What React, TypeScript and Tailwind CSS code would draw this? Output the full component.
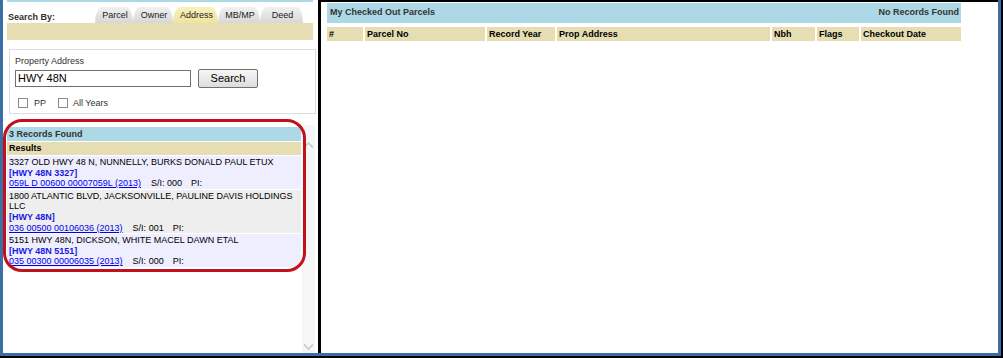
import React from "react"

const tabs = [
  { label: "Parcel", w: "w-[38px]", active: false },
  { label: "Owner", w: "w-[40px]", active: false },
  { label: "Address", w: "w-[45px]", active: true },
  { label: "MB/MP", w: "w-[42px]", active: false },
  { label: "Deed", w: "w-[43px]", active: false },
]

const results = [
  {
    addr: "3327 OLD HWY 48 N, NUNNELLY, BURKS DONALD PAUL ETUX",
    key: "[HWY 48N 3327]",
    parcel: "059L D 00600 00007059L (2013)",
    si: "000",
    bg: "bg-[#eeeeff]",
  },
  {
    addr: "1800 ATLANTIC BLVD, JACKSONVILLE, PAULINE DAVIS HOLDINGS LLC",
    key: "[HWY 48N]",
    parcel: "036 00500 00106036 (2013)",
    si: "001",
    bg: "bg-[#eeeeee]",
  },
  {
    addr: "5151 HWY 48N, DICKSON, WHITE MACEL DAWN ETAL",
    key: "[HWY 48N 5151]",
    parcel: "035 00300 00006035 (2013)",
    si: "000",
    bg: "bg-[#eeeeff]",
  },
]

const columns = [
  { label: "#", w: "w-[36px]" },
  { label: "Parcel No", w: "w-[120px]" },
  { label: "Record Year", w: "w-[68px]" },
  { label: "Prop Address", w: "w-[213px]" },
  { label: "Nbh", w: "w-[43px]" },
  { label: "Flags", w: "w-[42px]" },
  { label: "Checkout Date", w: "flex-1" },
]

function Chevron({ up }: { up?: boolean }) {
  return (
    <svg width="11" height="6" viewBox="0 0 11 6" className="block">
      <path
        d={up ? "M1 5.5 L5.5 1 L10 5.5" : "M1 0.5 L5.5 5 L10 0.5"}
        fill="none"
        stroke="#c9c9c9"
        strokeWidth="1.6"
      />
    </svg>
  )
}

export default function App() {
  return (
    <div className="w-[1003px] h-[358px] overflow-hidden bg-white border-r-[2px] border-b-[2px] border-black font-['Liberation_Sans',Arial,sans-serif] text-[9px] text-[#222]">
      <div className="flex h-full border-l-[3px] border-r-[3px] border-b-[3px] border-[#3b6ea5]">
        {/* Left search panel */}
        <div className="relative w-[315px] shrink-0 flex flex-col">
          <div className="ml-[4px] w-[306px] h-[2px] bg-[#add8e6]" />

          <div className="flex items-end h-[21px] pl-[5px]">
            <span className="w-[87px] font-bold leading-[11px] text-[#333]">Search By:</span>
            <div className="flex items-end">
              {tabs.map((t) => (
                <div
                  key={t.label}
                  className={`${t.w} h-[16px] flex items-center justify-center pl-[2px] leading-[11px] rounded-tl-[7px_16px] rounded-tr-[7px_15px] ${
                    t.active
                      ? "bg-[linear-gradient(#f7f1bd,#efe39e)]"
                      : "bg-[linear-gradient(#f1f1f1,#d7d7d7)]"
                  }`}
                >
                  {t.label}
                </div>
              ))}
            </div>
          </div>

          <div className="ml-[4px] w-[306px] h-[17px] bg-[#e7ddb2]" />

          {/* Search form */}
          <div className="mt-[9px] ml-[6px] w-[307px] h-[65px] border border-[#dcdcdc] pl-[5px] pt-[6px]">
            <div className="leading-[11px] text-[#333]">Property Address</div>
            <div className="flex items-center mt-[2px]">
              <div className="w-[176px] h-[17px] border border-[#707070] pl-[2px] text-[11px] leading-[15px] text-black">
                HWY 48N
              </div>
              <button className="ml-[7px] w-[60px] h-[19px] border border-[#707070] rounded-[2px] bg-[linear-gradient(#f6f6f6,#dddddd)] text-[11px] leading-[17px] text-black">
                Search
              </button>
            </div>
            <div className="flex items-center mt-[8px] ml-[3px] leading-[11px] text-[#333]">
              <span className="w-[10px] h-[10px] border border-[#8a8a8a] bg-white" />
              <span className="ml-[6px] mt-[2px]">PP</span>
              <span className="ml-[12px] w-[10px] h-[10px] border border-[#8a8a8a] bg-white" />
              <span className="ml-[5px] mt-[2px]">All Years</span>
            </div>
          </div>

          {/* Results list */}
          <div className="mt-[11px] ml-[4px] w-[311px] flex-1 flex gap-[1px] min-h-0">
            <div className="w-[294px] pt-[2px]">
              <div className="h-[14px] bg-[#add8e6] pl-[2px] font-bold leading-[14px] text-[#333]">
                3 Records Found
              </div>
              <div className="mt-[1px] h-[13px] bg-[#e7ddb2] pl-[2px] font-bold leading-[13px] text-black">
                Results
              </div>
              {results.map((r) => (
                <div key={r.key} className={`mt-[1px] pt-[1px] pl-[2px] leading-[10.6px] text-black ${r.bg}`}>
                  <div>{r.addr}</div>
                  <div className="font-bold text-[#1a1ae0]">{r.key}</div>
                  <div className="flex">
                    <a className="text-[#0000ee] underline">{r.parcel}</a>
                    <span className="ml-[10px]">S/I: {r.si}</span>
                    <span className="ml-[9px]">PI:</span>
                  </div>
                </div>
              ))}
            </div>
            <div className="w-[13px] bg-[#f6f6f6] flex flex-col items-center justify-between pt-[17px] pb-[3px]">
              <Chevron up />
              <Chevron />
            </div>
          </div>

          {/* highlight annotation */}
          <div className="pointer-events-none absolute left-0 top-[119px] w-[303px] h-[153px] border-[3px] border-[#c0111c] rounded-[19px]" />
        </div>

        {/* divider */}
        <div className="w-[3px] shrink-0 bg-black" />

        {/* Right checked out panel */}
        <div className="flex-1 border-t-[2px] border-black pl-[6px]">
          <div className="w-[634px]">
            <div className="mt-[1px] h-[20px] bg-[#add8e6] flex items-center justify-between pl-[3px] pr-[2px] font-bold text-[#333]">
              <span>My Checked Out Parcels</span>
              <span>No Records Found</span>
            </div>
            <div className="mt-[4px] h-[14px] flex gap-[2px] font-bold text-black leading-[14px]">
              {columns.map((c) => (
                <div key={c.label} className={`${c.w} bg-[#e7ddb2] pl-[2px]`}>
                  {c.label}
                </div>
              ))}
            </div>
          </div>
        </div>
      </div>
    </div>
  )
}
